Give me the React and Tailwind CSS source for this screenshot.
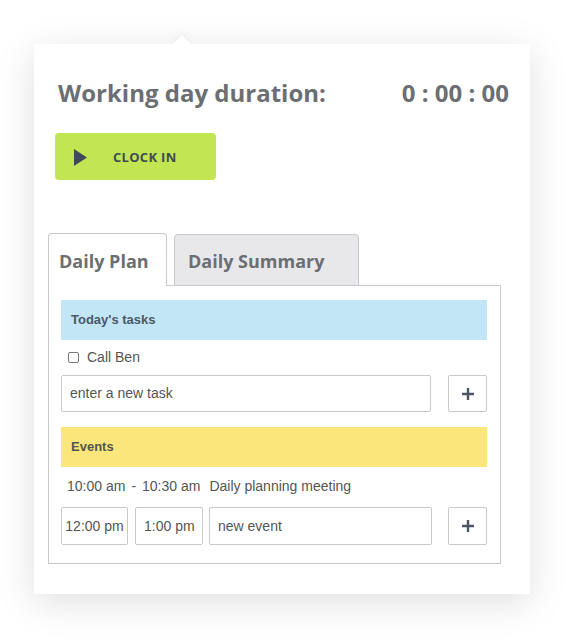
import React from "react";

const sans = { fontFamily: "'Liberation Sans', Arial, sans-serif" };

function Plus() {
  return (
    <svg width="14" height="14" viewBox="0 0 14 14">
      <path d="M7 1v12M1 7h12" stroke="#4b5563" strokeWidth="2.4" />
    </svg>
  );
}

export default function App() {
  return (
    <div className="w-[576px] h-[641px] bg-white pt-[44px] pl-[34px] font-['Open_Sans',sans-serif]">
      <div className="relative w-[496px] h-[550px] bg-white shadow-[0_8px_36px_rgba(0,0,0,0.13)]">
        {/* pointer */}
        <div className="absolute left-[141px] top-[-6px] w-[14px] h-[14px] bg-white rotate-45 shadow-[-3px_-3px_6px_rgba(0,0,0,0.04)]" />
        <div className="relative bg-white pt-[34px] px-[21px] pl-[24px]">
          <div className="flex items-center justify-between text-[24px] font-bold text-[#6b6f74] leading-[30px]">
            <span>Working day duration:</span>
            <span>0 : 00 : 00</span>
          </div>
          <button className="mt-[25px] -ml-[3px] w-[161px] h-[47px] rounded-[4px] bg-[#c2e652] flex items-center pl-[19px] pt-[2px]">
            <svg width="13" height="17" viewBox="0 0 13 17">
              <path d="M0 0L13 8.5L0 17Z" fill="#3f4b56" />
            </svg>
            <span className="ml-[26px] text-[13px] font-bold text-[#3f4b56] tracking-[0.3px]">CLOCK IN</span>
          </button>
        </div>

        <div className="ml-[14px] mt-[53px] w-[453px]">
          <div className="flex gap-[7px] items-end">
            <div className="relative z-10 w-[119px] h-[53px] border border-[#c9c9cb] border-b-0 rounded-t-[4px] bg-white flex items-center pl-[10px] pt-[2px] text-[18px] font-bold text-[#6b6f74]">
              Daily Plan
            </div>
            <div className="w-[185px] h-[52px] border border-[#c9c9cb] rounded-t-[4px] bg-[#e8e8ea] flex items-center pl-[13px] pt-[2px] text-[18px] font-bold text-[#6b6f74]">
              Daily Summary
            </div>
          </div>
          <div className="-mt-px border border-[#c9c9cb] h-[279px] pl-[12px] pr-[13px] pt-[14px]" style={sans}>
            <div className="h-[40px] bg-[#c3e6f6] flex items-center pl-[10px] text-[13px] font-bold text-[#4b5866]">
              Today's tasks
            </div>
            <div className="flex items-center h-[35px] pl-[7px] text-[14px] text-[#555]">
              <span className="w-[11px] h-[11px] border border-[#777] rounded-[2px] bg-white" />
              <span className="ml-[8px]">Call Ben</span>
            </div>
            <div className="flex justify-between">
              <div className="w-[370px] h-[37px] border border-[#c9c9cb] rounded-[2px] flex items-center pl-[8px] text-[14px] text-[#555]">
                enter a new task
              </div>
              <div className="w-[39px] h-[37px] border border-[#c9c9cb] rounded-[2px] flex items-center justify-center">
                <Plus />
              </div>
            </div>
            <div className="mt-[15px] h-[40px] bg-[#fbe67b] flex items-center pl-[10px] text-[13px] font-bold text-[#55564d]">
              Events
            </div>
            <div className="h-[40px] flex items-center pl-[6px] pb-[2px] text-[14px] text-[#555] gap-[6px]">
              <span>10:00 am</span>
              <span>-</span>
              <span>10:30 am</span>
              <span className="ml-[3px]">Daily planning meeting</span>
            </div>
            <div className="flex text-[14px] text-[#555]">
              <div className="w-[67px] h-[38px] border border-[#c9c9cb] rounded-[2px] flex items-center justify-center">12:00 pm</div>
              <div className="ml-[7px] w-[68px] h-[38px] border border-[#c9c9cb] rounded-[2px] flex items-center pl-[8px]">1:00 pm</div>
              <div className="ml-[6px] w-[223px] h-[38px] border border-[#c9c9cb] rounded-[2px] flex items-center pl-[8px]">new event</div>
              <div className="ml-auto w-[39px] h-[38px] border border-[#c9c9cb] rounded-[2px] flex items-center justify-center">
                <Plus />
              </div>
            </div>
          </div>
        </div>
      </div>
    </div>
  );
}
